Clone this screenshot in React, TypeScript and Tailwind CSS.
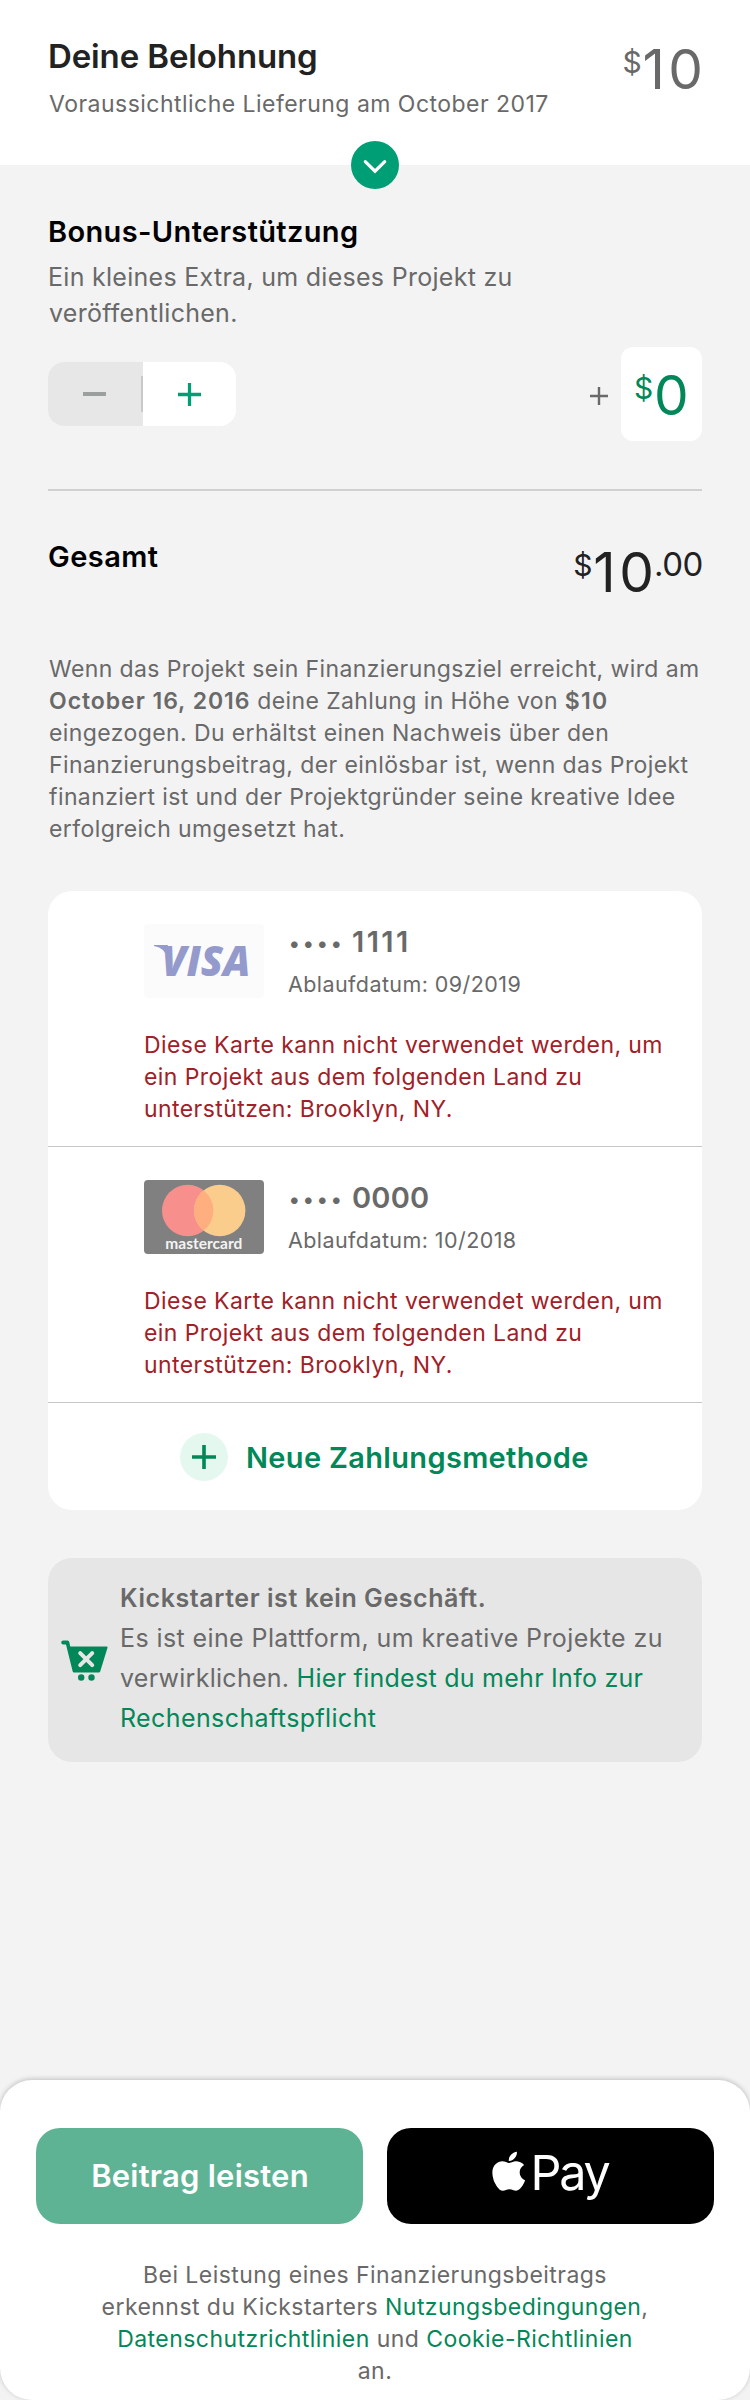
import type { ReactNode } from "react";
import { FaApple } from "react-icons/fa";

function Plus({ className, width }: { className: string; width: number }) {
  return (
    <svg viewBox="0 0 24 24" className={className} fill="none" stroke="currentColor" strokeWidth={width}>
      <path d="M12 0v24M0 12h24" />
    </svg>
  );
}

function Amount({ whole, cents }: { whole: string; cents?: string }) {
  return (
    <div className="flex items-start">
      <span className="mt-[5px] w-5 text-[30px] leading-[30px]">$</span>
      <span className="text-[55px] leading-[54px]">
        <span className="tracking-[3.5px]">{whole.slice(0, -1)}</span>
        {whole.slice(-1)}
      </span>
      {cents && <span className="mt-[3px] text-[33px] leading-[33px] tracking-[-0.4px]">{cents}</span>}
    </div>
  );
}

function VisaLogo() {
  return (
    <svg viewBox="0 0 120 74" className="h-[74px] w-[120px] shrink-0">
      <rect width="120" height="74" rx="4" fill="#fbfbfb" />
      <path d="M10 21h14l-3 8c-2-4-6-6-11-7z" fill="#949acb" />
      <text
        x="17.5"
        y="51.5"
        textLength="89"
        lengthAdjust="spacingAndGlyphs"
        className="font-['Open_Sans',sans-serif] text-[42.5px] font-extrabold italic"
        fill="#949acb"
      >
        VISA
      </text>
    </svg>
  );
}

function MastercardLogo() {
  return (
    <svg viewBox="0 0 120 74" className="h-[74px] w-[120px] shrink-0">
      <rect width="120" height="74" rx="4" fill="#808080" />
      <circle cx="43.7" cy="30.5" r="25.7" fill="#f7908d" />
      <circle cx="75.7" cy="30.5" r="25.7" fill="#fbcd8d" />
      <path d="M59.7 10.4a25.7 25.7 0 0 1 0 40.2a25.7 25.7 0 0 1 0-40.2z" fill="#ffae80" />
      <text
        x="21.3"
        y="69"
        textLength="77"
        lengthAdjust="spacingAndGlyphs"
        className="font-['Lato',sans-serif] text-[15px] font-bold"
        fill="#f4f4f4"
      >
        mastercard
      </text>
    </svg>
  );
}

function CartIcon() {
  return (
    <svg viewBox="0 0 47 41" className="h-[41px] w-[47px] shrink-0">
      <path d="M2.2 .5H6.6Q8 .5 8.3 2L9.2 6.5H45.6Q46.9 6.5 46.5 7.8L39.2 31.5Q38.8 32.5 37.8 32.5H13Q12 32.5 11.7 31.5L5 4.5H2.2a2 2 0 0 1 0-4z" fill="#028858" />
      <path d="M19.2 13.2l12 12M31.2 13.2l-12 12" stroke="#e6e6e6" strokeWidth="4" strokeLinecap="round" />
      <circle cx="20.2" cy="37.5" r="3.2" fill="#028858" />
      <circle cx="30.5" cy="37.5" r="3.2" fill="#028858" />
    </svg>
  );
}

function CardRow({ logo, digits, expiry }: { logo: ReactNode; digits: ReactNode; expiry: string }) {
  return (
    <div className="h-64 border-b border-[#c6c6c6] pt-[33px] pl-24">
      <div className="flex gap-6">
        {logo}
        <div className="text-[#696969]">
          <div className="flex h-9 items-start font-semibold leading-9">
            <span className="mt-[2px] ml-px w-[63px] text-[21px] tracking-[3.4px]">••••</span>
            {digits}
          </div>
          <div className="mt-[10px] text-[21.5px] leading-7 tracking-[0.42px]">{expiry}</div>
        </div>
      </div>
      <p className="mt-[31px] whitespace-nowrap text-[23px] leading-8 tracking-[0.42px] text-[#a12027]">
        Diese Karte kann nicht verwendet werden, um
        <br />
        ein Projekt aus dem folgenden Land zu
        <br />
        unterstützen: Brooklyn, NY.
      </p>
    </div>
  );
}

export default function App() {
  return (
    <div className="flex h-[2400px] w-[750px] flex-col bg-[#f3f3f3] font-['Inter',sans-serif] text-[#696969]">
      <header className="relative flex h-[165px] shrink-0 justify-between bg-white pt-9 pl-12">
        <div>
          <h1 className="text-[33px] leading-10 font-semibold tracking-[-0.12px] text-[#222]">Deine Belohnung</h1>
          <p className="mt-3 ml-px text-[23px] leading-8 tracking-[0.47px]">Voraussichtliche Lieferung am October 2017</p>
        </div>
        <div className="mt-[6px] mr-[47px]">
          <Amount whole="10" />
        </div>
        <div className="absolute top-[141px] left-[351px] flex size-12 items-center justify-center rounded-full bg-[#009e74]">
          <svg viewBox="0 0 24 16" className="mt-[3px] h-4 w-6" fill="none" stroke="#fff" strokeWidth="3.2" strokeLinecap="round">
            <path d="M2.3 2.6L12 12.2L21.7 2.6" />
          </svg>
        </div>
      </header>

      <main className="px-12 pt-[49px]">
        <h2 className="text-[29px] leading-9 font-semibold tracking-[0.36px] text-black">Bonus-Unterstützung</h2>
        <p className="mt-[9px] text-[25px] leading-9 tracking-[0.28px]">
          Ein kleines Extra, um dieses Projekt zu
          <br />
          <span className="ml-px">veröffentlichen.</span>
        </p>

        <div className="mt-4 flex h-[94px] items-center justify-between">
          <div className="flex h-16 items-center overflow-hidden rounded-2xl bg-white text-[#009e74]">
            <div className="flex h-16 w-[95px] items-center bg-[#e7e7e7]">
              <div className="ml-[35px] h-1 w-[23px] bg-[#9b9f9e]" />
              <div className="ml-[35px] h-9 w-[2px] bg-[#c9c9c9]" />
            </div>
            <div className="flex w-[93px] justify-center">
              <Plus className="size-[23px]" width={3.4} />
            </div>
          </div>
          <div className="flex items-center">
            <Plus className="mt-1 mr-[13px] size-[18px]" width={3.2} />
            <div className="flex h-[94px] w-[81px] items-start rounded-xl bg-white pt-[21px] pl-[13px] text-[#028858]">
              <Amount whole="0" />
            </div>
          </div>
        </div>

        <div className="mt-12 h-[2px] bg-[#d0d0d0]" />

        <div className="mt-12 flex h-[60px] justify-between">
          <h2 className="text-[29px] leading-9 font-semibold tracking-[0.45px] text-black">Gesamt</h2>
          <div className="mt-[6px] -mr-px text-[#222]">
            <Amount whole="10" cents=".00" />
          </div>
        </div>

        <p className="mt-[54px] ml-px whitespace-nowrap text-[23px] leading-8 tracking-[0.4px]">
          Wenn das Projekt sein Finanzierungsziel erreicht, wird am
          <br />
          <b className="font-semibold tracking-[0.95px]">October 16, 2016</b> deine Zahlung in Höhe von{" "}
          <b className="font-semibold tracking-[1.3px]">$10</b>
          <br />
          eingezogen. Du erhältst einen Nachweis über den
          <br />
          Finanzierungsbeitrag, der einlösbar ist, wenn das Projekt
          <br />
          finanziert ist und der Projektgründer seine kreative Idee
          <br />
          erfolgreich umgesetzt hat.
        </p>

        <section className="mt-[46px] h-[619px] rounded-3xl bg-white">
          <CardRow
            logo={<VisaLogo />}
            digits={<span className="text-[29px] tracking-[2.4px]">1111</span>}
            expiry="Ablaufdatum: 09/2019"
          />
          <CardRow
            logo={<MastercardLogo />}
            digits={<span className="text-[29px] tracking-[0.2px]">0000</span>}
            expiry="Ablaufdatum: 10/2018"
          />
          <div className="flex h-[107px] items-center pl-[132px] text-[#028858]">
            <div className="flex size-12 items-center justify-center rounded-full bg-[#e5f8f0]">
              <Plus className="size-6" width={3.6} />
            </div>
            <span className="mt-[2px] ml-[18px] text-[29px] leading-9 font-semibold tracking-[0.33px]">Neue Zahlungsmethode</span>
          </div>
        </section>

        <section className="mt-12 flex h-[204px] items-start rounded-3xl bg-[#e6e6e6] pt-5 pl-[13px]">
          <div className="mt-[62px]">
            <CartIcon />
          </div>
          <p className="ml-3 whitespace-nowrap text-[25px] leading-10 tracking-[0.4px]">
            <b className="font-semibold tracking-[0.57px]">Kickstarter ist kein Geschäft.</b>
            <br />
            Es ist eine Plattform, um kreative Projekte zu
            <br />
            <span className="tracking-[0.27px]">
              verwirklichen. <span className="text-[#028858]">Hier findest du mehr Info zur</span>
            </span>
            <br />
            <span className="text-[#028858]">Rechenschaftspflicht</span>
          </p>
        </section>
      </main>

      <footer className="mt-auto h-80 shrink-0 rounded-[32px] bg-white px-9 pt-12 shadow-[0_-1px_5px_rgba(0,0,0,0.22)]">
        <div className="grid grid-cols-2 gap-6">
          <button className="h-24 rounded-3xl bg-[#5fb395] pl-px text-[31px] leading-10 font-semibold tracking-[0.22px] text-white">
            Beitrag leisten
          </button>
          <button className="flex h-24 items-start rounded-3xl bg-black pl-[105px] text-white">
            <FaApple className="mt-[21px] h-[44.6px] w-[33.4px]" />
            <span className="mt-5 ml-[5px] text-[48.5px] leading-[49px] tracking-[-2.2px]">Pay</span>
          </button>
        </div>
        <p className="mt-[35px] text-center text-[23px] leading-8 tracking-[0.45px]">
          Bei Leistung eines Finanzierungsbeitrags
          <br />
          erkennst du Kickstarters <span className="text-[#028858]">Nutzungsbedingungen</span>,
          <br />
          <span className="text-[#028858]">Datenschutzrichtlinien</span> und{" "}
          <span className="text-[#028858]">Cookie-Richtlinien</span>
          <br />
          an.
        </p>
      </footer>
    </div>
  );
}
